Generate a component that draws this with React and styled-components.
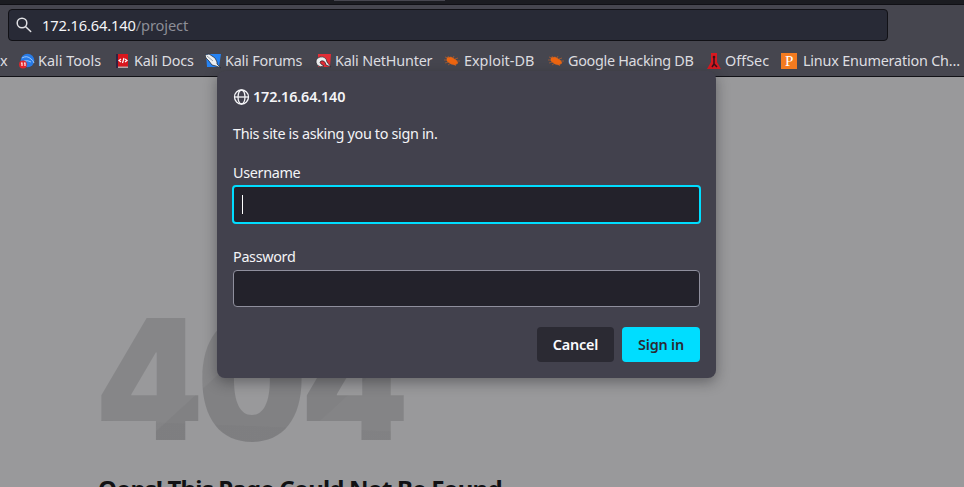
import React from 'react';
import styled, { createGlobalStyle } from 'styled-components';

const Global = createGlobalStyle`
  * { box-sizing: border-box; }
  body { margin: 0; overflow: hidden; background: #99999b; font-family: "Noto Sans", sans-serif; }
`;

const Browser = styled.div`
  position: relative;
  display: flex;
  flex-direction: column;
  width: 964px;
  height: 487px;
  overflow: hidden;
`;

const TabStrip = styled.div`
  flex: none;
  height: 5px;
  padding-left: 334px;
  background: #1b1c21;
  border-bottom: 1px solid #101015;
`;

const TabEdge = styled.div`
  width: 111px;
  height: 1px;
  background: #46464f;
`;

const Toolbar = styled.header`
  flex: none;
  height: 72px;
  padding-top: 4px;
  background: #46464f;
  border-bottom: 1px solid #111116;
`;

const AddressBar = styled.div`
  display: flex;
  align-items: center;
  width: 880px;
  height: 32px;
  margin-left: 8px;
  padding-left: 7px;
  gap: 10px;
  background: #282a36;
  border: 1px solid #111116;
  border-radius: 4px;
  color: #8d8e97;
  font-size: 14.67px;
  letter-spacing: -.14px;
  white-space: nowrap;
`;

const Host = styled.span`
  color: #f5f5f8;
`;

const Bookmarks = styled.nav`
  display: grid;
  grid-template-columns: 19px 96px 90px 110px 129px 104px 159px 74px 183px;
  height: 40px;
  align-items: center;
  color: #dedee1;
  font-size: 14.4px;
  white-space: nowrap;
`;

const Bookmark = styled.div`
  display: flex;
  align-items: center;
  gap: 3px;
  line-height: 20px;
  padding-bottom: 1px;
  letter-spacing: ${p => p.$spacing || '-.2px'};
  svg { flex: none; }
`;

const Page = styled.main`
  display: flex;
  flex-direction: column;
  flex: 1;
  padding: 200px 0 0 95px;
  background: #99999b;
`;

const ErrorCode = styled.div`
  width: 350px;
  height: 204px;
  flex: none;
  font: 900 168px/204px Inter, sans-serif;
  letter-spacing: -7px;
  white-space: nowrap;
  transform-origin: left;
  transform: scaleX(.92);
  color: transparent;
  background:
    linear-gradient(2deg, rgba(110, 110, 112, .1) 0 28%, transparent 28.3%),
    linear-gradient(140deg, #868688 0 42%, #818183 42.3% 70%, #848486 70.3%);
  background-clip: text;
`;

const ErrorTitle = styled.h1`
  margin: -9px 0 0 3px;
  color: #111113;
  font: 700 24px/34px "Noto Sans", sans-serif;
  letter-spacing: -.8px;
  white-space: nowrap;
`;

const Dialog = styled.section`
  position: absolute;
  top: 71px;
  left: 217px;
  display: flex;
  flex-direction: column;
  width: 499px;
  height: 307px;
  padding: 16px 16px 16px;
  background: #42414d;
  border-radius: 8px;
  box-shadow: 0 4px 14px rgba(20, 20, 25, .4);
  color: #f4f4f7;
  font-size: 14.4px;
  letter-spacing: -.33px;
  line-height: 20px;
`;

const DialogTitle = styled.div`
  display: flex;
  align-items: center;
  gap: 3px;
  font-weight: 600;
  letter-spacing: -.15px;
`;

const Message = styled.div`
  margin-top: 17px;
`;

const Field = styled.label`
  display: flex;
  flex-direction: column;
  gap: ${p => p.$focused ? '2px' : '3px'};
  margin-top: ${p => p.$focused ? '19px' : '23px'};
`;

const Input = styled.div`
  display: flex;
  align-items: center;
  height: ${p => p.$focused ? '39px' : '37px'};
  margin: ${p => p.$focused ? '0 -1px' : '0'};
  padding-left: 8px;
  border: ${p => p.$focused ? '2px solid #00ddff' : '1px solid #8f8f9d'};
  border-radius: 4px;
  background: #23222b;
`;

const Caret = styled.i`
  width: 1px;
  height: 19px;
  background: #fff;
`;

const Actions = styled.div`
  display: flex;
  justify-content: flex-end;
  gap: 8px;
  margin-top: auto;
`;

const Button = styled.button`
  width: ${p => p.$primary ? '78px' : '77px'};
  height: 35px;
  padding: 0;
  border: 0;
  border-radius: 4px;
  background: ${p => p.$primary ? '#00ddff' : '#2b2a33'};
  color: ${p => p.$primary ? '#2b2a33' : '#fbfbfe'};
  font: 600 14.4px "Noto Sans", sans-serif;
  letter-spacing: -.2px;
`;

const SearchIcon = () => (
  <svg width="16" height="16" viewBox="0 0 16 16" fill="none" stroke="#e1e1e5" strokeWidth="1.5" strokeLinecap="round">
    <circle cx="6" cy="6" r="4.8" /><path d="m9.7 9.7 5 4.8" />
  </svg>
);

const GlobeIcon = () => (
  <svg width="17" height="16" viewBox="0 0 17 16" fill="none" stroke="#f4f4f7" strokeWidth="1.3">
    <circle cx="8.5" cy="8" r="7" /><ellipse cx="8.5" cy="8" rx="3.5" ry="7" /><path d="M1.5 8h14" />
  </svg>
);

const ToolsIcon = () => (
  <svg width="16" height="16" viewBox="0 0 16 16">
    <circle cx="8.5" cy="7.5" r="6.8" fill="#287be7" />
    <path d="M3 5q5-3 9 1 2 1 3 4M5 8q4-1 7 1" fill="none" stroke="#b9dbff" strokeWidth=".8" />
    <circle cx="4" cy="11.5" r="3.9" fill="#e4252d" />
    <path d="M2 10h1v3M5 10h1v3" fill="none" stroke="#fff" strokeWidth="1.1" />
  </svg>
);

const DocsIcon = () => (
  <svg width="16" height="16" viewBox="0 0 16 16">
    <path d="M1 1h12v14H1z" fill="#d9161d" /><path d="M1 1h2v14H1z" fill="#302342" /><path d="M3 13.5h10V15H3z" fill="#b7a6a6" />
    <path d="m6 6-2 1.5L6 9M10 6l2 1.5L10 9M9 5 7.5 10" fill="none" stroke="#fff" strokeWidth="1.2" />
  </svg>
);

const ForumsIcon = () => (
  <svg width="17" height="16" viewBox="0 0 17 16">
    <path d="M1 1h15l-2 13H2z" fill="#2582f2" />
    <path d="m0 2 4-1 6 4 2 4v2l4 4-5-2-4-1-3-4-3-3z" fill="#eceff2" stroke="#20242d" strokeWidth=".7" />
    <path d="m2 3 6 5" stroke="#717982" strokeWidth=".7" />
  </svg>
);

const HunterIcon = () => (
  <svg width="17" height="16" viewBox="0 0 17 16">
    <path d="M3 1h13l-1 13H3z" fill="#e32d36" />
    <path d="M2 12Q-1 6 5 4q6-1 7 5l4 5-5-2Q10 7 6 8q-2 1 0 3l3 2q-4 2-7-1z" fill="#eee" stroke="#242329" strokeWidth=".7" />
  </svg>
);

const BugIcon = () => (
  <svg width="17" height="16" viewBox="0 0 17 16" stroke="#e96818" fill="#ee6510" strokeWidth=".5">
    <path d="m3 5 4-1 5 3 2 3-3 2-4-1-4-3z" />
    <path d="m4 5-3-1M5 5 4 3M9 5l1-2M11 6l3-1M12 8h4M5 9l-4 1M7 10l-3 2M10 11l2 2M3 7H0" fill="none" />
  </svg>
);

const OffSecIcon = () => (
  <svg width="15" height="16" viewBox="0 0 15 16">
    <path d="M4 0h6v9l4 7H0l4-7z" fill="#d61920" />
    <path d="M7 3v9M5 14l2-3 3 3" stroke="#390f18" strokeWidth="1.5" fill="none" /><circle cx="7" cy="4" r="1.3" fill="#390f18" />
  </svg>
);

const Packet = styled.span`
  width: 16px;
  height: 16px;
  margin-right: 3px;
  flex: none;
  background: #f47b20;
  color: #fff;
  font: 15px/16px "Liberation Serif", serif;
  text-align: center;
`;

export default function App() {
  return (
    <Browser>
      <Global />
      <TabStrip><TabEdge /></TabStrip>
      <Toolbar>
        <AddressBar><SearchIcon /><div><Host>172.16.64.140</Host>/project</div></AddressBar>
        <Bookmarks>
          <Bookmark>x</Bookmark>
          <Bookmark $spacing="0"><ToolsIcon />Kali Tools</Bookmark>
          <Bookmark $spacing="-.15px"><DocsIcon />Kali Docs</Bookmark>
          <Bookmark><ForumsIcon />Kali Forums</Bookmark>
          <Bookmark><HunterIcon />Kali NetHunter</Bookmark>
          <Bookmark $spacing="0"><BugIcon />Exploit-DB</Bookmark>
          <Bookmark $spacing="-.3px"><BugIcon />Google Hacking DB</Bookmark>
          <Bookmark $spacing="0"><OffSecIcon />OffSec</Bookmark>
          <Bookmark><Packet>P</Packet>Linux Enumeration Ch…</Bookmark>
        </Bookmarks>
      </Toolbar>
      <Page>
        <ErrorCode>404</ErrorCode>
        <ErrorTitle>Oops! This Page Could Not Be Found</ErrorTitle>
      </Page>
      <Dialog>
        <DialogTitle><GlobeIcon />172.16.64.140</DialogTitle>
        <Message>This site is asking you to sign in.</Message>
        <Field $focused>Username<Input $focused><Caret /></Input></Field>
        <Field>Password<Input /></Field>
        <Actions><Button>Cancel</Button><Button $primary>Sign in</Button></Actions>
      </Dialog>
    </Browser>
  );
}
